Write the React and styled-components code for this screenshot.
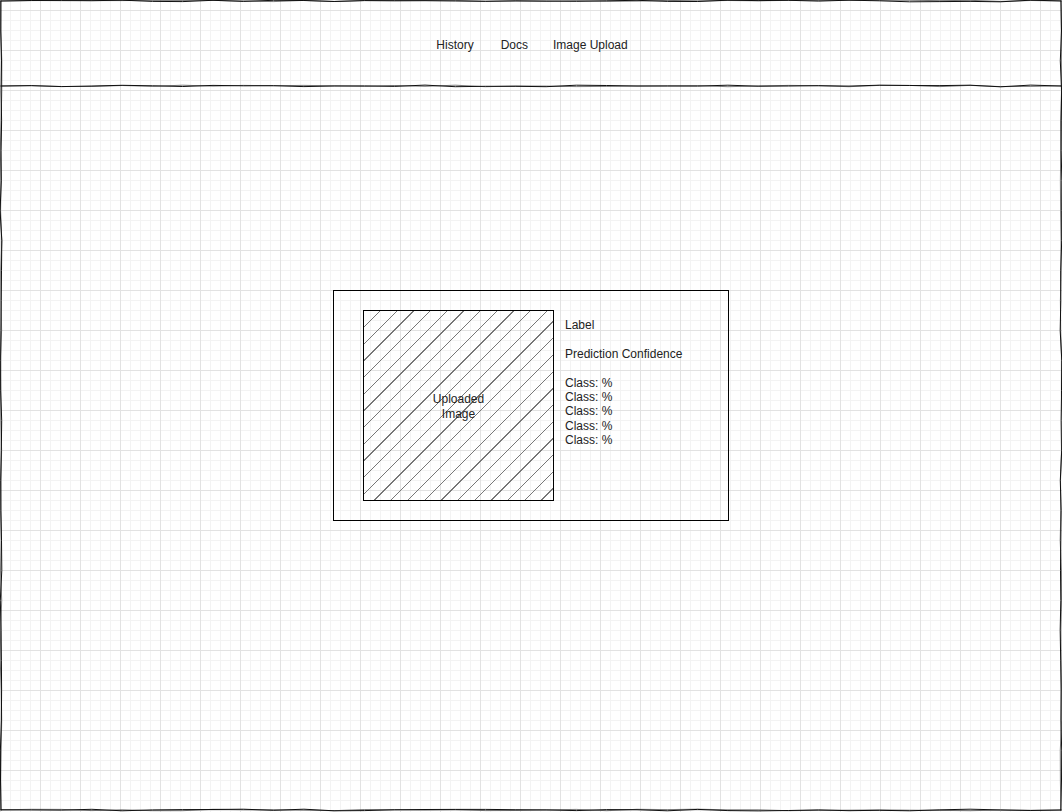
import React from "react";
import styled, { createGlobalStyle } from "styled-components";

const GlobalStyle = createGlobalStyle`
  html, body { margin: 0; padding: 0; background: #ffffff; }
  body { font-family: "Liberation Sans", Arial, Helvetica, sans-serif; color: #222; }
  * { box-sizing: border-box; }
`;

const Page = styled.div`
  position: relative;
  width: 1062px;
  height: 812px;
  overflow: hidden;
  background-color: #ffffff;
  background-image:
    linear-gradient(to bottom, #e2e2e2 1px, transparent 1px),
    linear-gradient(to right, #e2e2e2 1px, transparent 1px),
    linear-gradient(to bottom, #f3f3f3 1px, transparent 1px),
    linear-gradient(to right, #f3f3f3 1px, transparent 1px);
  background-size: 40px 40px, 40px 40px, 10px 10px, 10px 10px;
  background-position: 0 10px, 0 10px, 0 0, 0 0;
  display: flex;
  flex-direction: column;
`;

const Header = styled.header`
  height: 86px;
  display: flex;
  justify-content: center;
  padding-top: 38px;
`;

const Nav = styled.nav`
  display: flex;
  height: 14px;
  padding-left: 2px;
`;

const NavItem = styled.span`
  font-size: 12px;
  line-height: 14px;
  color: #222;
  margin-right: ${(p) => p.$space || 0}px;
`;

const Main = styled.main`
  flex: 1;
  display: flex;
  justify-content: center;
  padding-top: 204px;
`;

const Card = styled.section`
  width: 396px;
  height: 231px;
  border: 1px solid #000;
  padding: 19px 0 0 29px;
  display: flex;
  align-items: flex-start;
  gap: 11px;
`;

const ImageBox = styled.div`
  width: 191px;
  height: 191px;
  border: 1px solid #000;
  flex: none;
  display: flex;
  align-items: center;
  justify-content: center;
  text-align: center;
  font-size: 12px;
  line-height: 14.4px;
  color: #222;
  background-image: repeating-linear-gradient(
    135deg,
    transparent 0px,
    transparent 10.9px,
    #777 10.9px,
    #777 11.8px
  );
  padding-top: 2px;
`;

const Info = styled.div`
  padding-top: 8px;
  font-size: 12px;
  line-height: 14.4px;
  color: #222;
  display: flex;
  flex-direction: column;
`;

const InfoLine = styled.div`
  margin-bottom: ${(p) => (p.$gap ? "14.4px" : "0")};
  white-space: nowrap;
`;

const Sketch = styled.svg`
  position: absolute;
  inset: 0;
  pointer-events: none;
`;

function rng(seed) {
  let s = seed >>> 0;
  return () => {
    s = (s * 1664525 + 1013904223) >>> 0;
    return s / 4294967296;
  };
}

function wobble(x1, y1, x2, y2, seed, amp = 1.2, step = 30) {
  const r = rng(seed);
  const dx = x2 - x1;
  const dy = y2 - y1;
  const len = Math.hypot(dx, dy);
  const n = Math.max(2, Math.round(len / step));
  const nx = -dy / len;
  const ny = dx / len;
  let d = `M${x1.toFixed(1)} ${y1.toFixed(1)}`;
  for (let i = 1; i <= n; i++) {
    const t = i / n;
    const o = i === n ? (r() - 0.5) * amp * 0.6 : (r() - 0.5) * 2 * amp;
    const x = x1 + dx * t + nx * o;
    const y = y1 + dy * t + ny * o;
    d += ` L${x.toFixed(1)} ${y.toFixed(1)}`;
  }
  return d;
}

function SketchFrame() {
  const lines = [
    [1, 1, 1061, 1],
    [1061, 1, 1061, 810],
    [1061, 810, 1, 810],
    [1, 810, 1, 1],
    [1, 86, 1061, 86],
  ];
  return (
    <Sketch width="1062" height="812" viewBox="0 0 1062 812">
      {lines.map((l, i) => (
        <g key={i} fill="none" stroke="#111" strokeLinecap="round" strokeLinejoin="round">
          <path d={wobble(...l, 11 + i * 7, 0.9)} strokeWidth="1" />
          <path d={wobble(...l, 97 + i * 13, 0.8)} strokeWidth="0.8" opacity="0.7" />
        </g>
      ))}
    </Sketch>
  );
}

export default function App() {
  return (
    <>
      <GlobalStyle />
      <Page>
        <Header>
          <Nav>
            <NavItem $space={27}>History</NavItem>
            <NavItem $space={25}>Docs</NavItem>
            <NavItem>Image Upload</NavItem>
          </Nav>
        </Header>
        <Main>
          <Card>
            <ImageBox>
              Uploaded
              <br />
              Image
            </ImageBox>
            <Info>
              <InfoLine $gap>Label</InfoLine>
              <InfoLine $gap>Prediction Confidence</InfoLine>
              <InfoLine>Class: %</InfoLine>
              <InfoLine>Class: %</InfoLine>
              <InfoLine>Class: %</InfoLine>
              <InfoLine>Class: %</InfoLine>
              <InfoLine>Class: %</InfoLine>
            </Info>
          </Card>
        </Main>
        <SketchFrame />
      </Page>
    </>
  );
}
